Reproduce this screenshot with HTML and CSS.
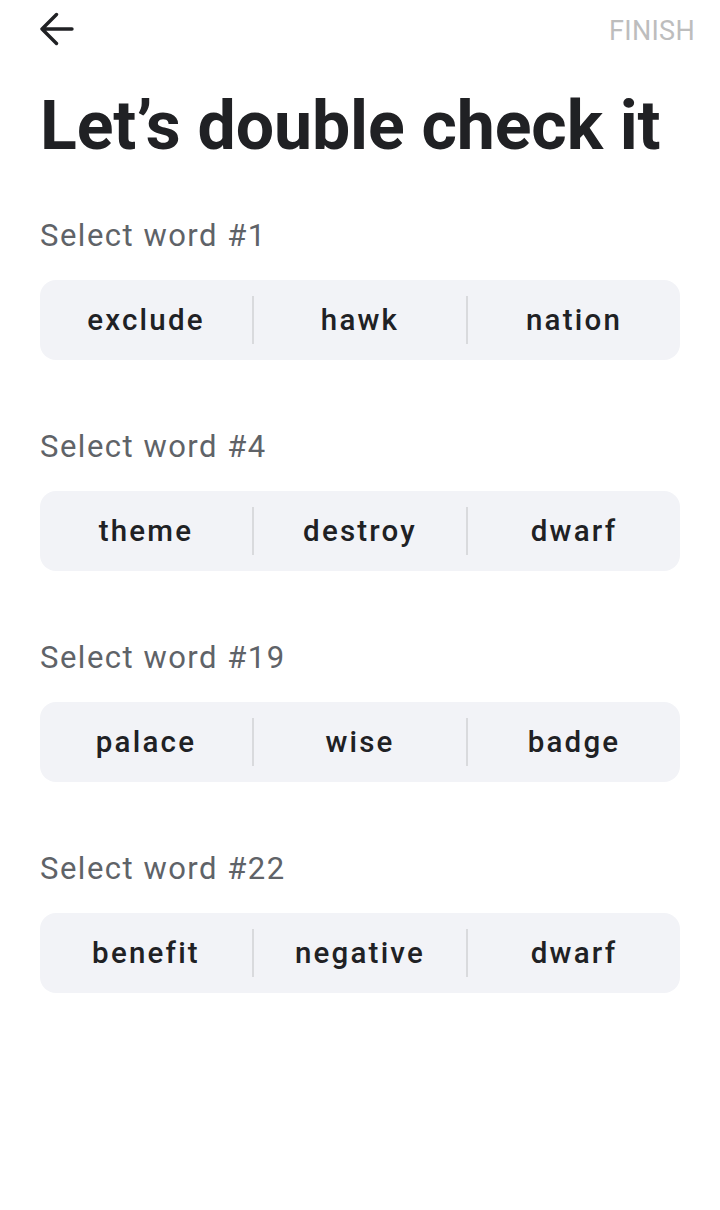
FILE: index.html
```html
<!DOCTYPE html>
<html>
<head>
<meta charset="utf-8">
<link rel="stylesheet" href="styles.css">
</head>
<body>
<div class="page">
  <header class="topbar">
    <button class="back" aria-label="Back">
      <svg width="34" height="34" viewBox="0 0 34 34"><path d="M32 17H2M16.5 2.5L2 17L16.5 31.5" fill="none" stroke="#202124" stroke-width="3.4" stroke-linecap="round" stroke-linejoin="round"/></svg>
    </button>
    <span class="finish">FINISH</span>
  </header>
  <h1 class="title">Let’s double check it</h1>

  <section class="group">
    <div class="label">Select word #1</div>
    <div class="choices"><span class="word">exclude</span><span class="sep"></span><span class="word">hawk</span><span class="sep"></span><span class="word">nation</span></div>
  </section>
  <section class="group">
    <div class="label">Select word #4</div>
    <div class="choices"><span class="word">theme</span><span class="sep"></span><span class="word">destroy</span><span class="sep"></span><span class="word">dwarf</span></div>
  </section>
  <section class="group">
    <div class="label">Select word #19</div>
    <div class="choices"><span class="word">palace</span><span class="sep"></span><span class="word">wise</span><span class="sep"></span><span class="word">badge</span></div>
  </section>
  <section class="group">
    <div class="label">Select word #22</div>
    <div class="choices"><span class="word">benefit</span><span class="sep"></span><span class="word">negative</span><span class="sep"></span><span class="word">dwarf</span></div>
  </section>
</div>
</body>
</html>
```
FILE: styles.css
```css
html, body { margin: 0; padding: 0; background: #fff; }
body { font-family: Roboto, "Noto Sans", sans-serif; color: #202124; }
.page { padding: 0 40px; }
.topbar { display: flex; justify-content: space-between; align-items: center; height: 58px; margin-right: -15px; }
.back { border: 0; background: none; padding: 0; display: flex; width: 34px; height: 34px; }
.finish { font-size: 27px; color: #bdbdbd; letter-spacing: 0.3px; margin-top: 3px; }
.title { margin: 28px 0 0; font-size: 68px; font-weight: 700; line-height: 80px; letter-spacing: -0.1px; color: #202124; }
.group { margin-top: 50px; }
.group + .group { margin-top: 67px; }
.label { font-size: 31px; line-height: 40px; color: #5f6368; letter-spacing: 1.5px; }
.choices { margin-top: 24px; height: 80px; background: #f2f3f7; border-radius: 16px; display: flex; align-items: center; }
.word { flex: 1; text-align: center; font-size: 29.5px; font-weight: 500; letter-spacing: 2.2px; color: #202124; }
.sep { width: 2px; height: 48px; background: #d9dadd; }
```
